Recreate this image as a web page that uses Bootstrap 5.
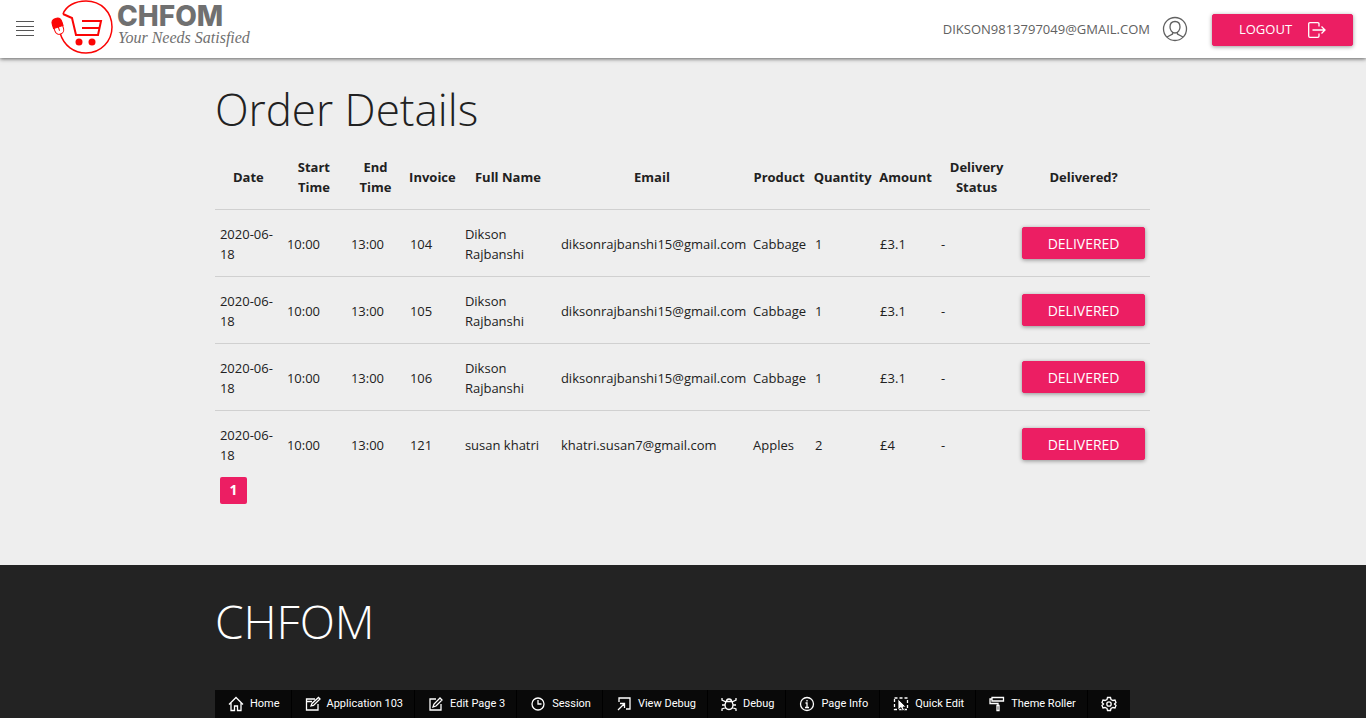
<!DOCTYPE html>
<html lang="en">
<head>
<meta charset="utf-8">
<meta name="viewport" content="width=device-width, initial-scale=1">
<title>Order Details</title>
<link href="https://cdn.jsdelivr.net/npm/bootstrap@5.3.0/dist/css/bootstrap.min.css" rel="stylesheet">
<style>
body { font-family: "Open Sans", "Noto Sans", sans-serif; font-size: 13px; line-height: 20px; color: #212121; background: #eee; }
.topbar { height: 58px; padding-right: 13px; box-shadow: 0 1px 4px rgba(0,0,0,.6); }
.menu-btn { padding: 0; width: 50px; height: 24px; line-height: 1; color: #555; }
.menu-btn svg { display: block; margin: 0 auto; }
.brand-word { font-family: Inter, sans-serif; font-weight: 800; font-size: 28px; fill: #707070; }
.brand-tag { font-family: "Liberation Serif", serif; font-style: italic; font-size: 16px; fill: #707070; }
.user-link { color: #616161; }
.btn-pink { --bs-btn-color: #fff; --bs-btn-bg: #ec1e63; --bs-btn-border-color: #ec1e63; --bs-btn-hover-color: #fff; --bs-btn-hover-bg: #d81b5c; --bs-btn-hover-border-color: #d81b5c; --bs-btn-font-size: 14px; --bs-btn-border-radius: 2px; --bs-btn-padding-y: 0; height: 32px; box-shadow: 0 1px 4px rgba(0,0,0,.4); }
.logout { --bs-btn-font-size: 13px; width: 141px; margin-top: 2px; }
.page-col { width: 70%; padding: 0 11px 0 10px; }
.display-title { font-weight: 300; font-size: 44px; line-height: 55px; }
.content { min-height: 507px; padding-top: 24px; }
.orders { --bs-table-bg: transparent; --bs-table-color: #212121; table-layout: fixed; border-color: #d0d0d0; }
.orders > :not(caption) > * > * { padding: 14px 5px 12px; border-bottom-width: 1px; }
.orders tbody td:last-child { padding: 13px 5px; }
.orders tbody tr:last-child td { border-bottom: 0; }
.orders thead th { padding: 12px 0; text-align: center; vertical-align: middle; font-weight: 700; }
.w-date { width: 67px } .w-start { width: 64px } .w-end { width: 59px } .w-inv { width: 55px } .w-name { width: 96px }
.w-prod { width: 62px } .w-qty { width: 65px } .w-amt { width: 61px } .w-status { width: 81px } .w-act { width: 133px }
.page-num { width: 27px; height: 27px; margin-left: 5px; border-radius: 2px; background: #ec1e63; color: #fff; font-weight: 700; font-size: 14px; line-height: 26px; }
.site-footer { background: #232323; color: #fff; min-height: 153px; padding-top: 29px; }
.site-footer .display-title { font-size: 46px; }
.devbar { background: #090909; height: 28px; width: max-content; }
.devbar button { border: 0; border-right: 1px solid #000; background: none; color: #fff; font-family: Roboto, sans-serif; font-size: 11px; line-height: 28px; padding: 0 11px 0 13px; gap: 6px; white-space: nowrap; }
.devbar button:last-child { border-right: 0; padding-right: 13px; }
svg.line-icon { fill: none; stroke: currentColor; flex: none; }
</style>
</head>
<body>
<header class="topbar bg-white d-flex align-items-center position-relative">
  <button class="btn menu-btn border-0" aria-label="Menu"><svg class="line-icon" width="18" height="16"><path d="M0 .5h18M0 5.500h18M0 9.500h18M0 14.500h18"/></svg></button>
  <a href="#" class="d-block" aria-label="CHFOM home">
    <svg class="d-block" width="206" height="58" viewBox="0 0 206 58">
      <path d="M10 33C14 46 24 53 36 53C51 53 62 41 62 27C62 12 51 1 36 1C25 1 16 6 13 14" fill="none" stroke="#fb0505" stroke-width="1.500"/>
      <path d="M13 14L22 18L26 35H48L51 21H32M32 28H49" fill="none" stroke="#fb0505" stroke-width="2"/>
      <circle cx="29" cy="42" r="3.500" fill="#fb0505"/><circle cx="42" cy="42" r="3.500" fill="#fb0505"/>
      <g transform="rotate(-18 8 26)"><rect x="3.500" y="18.500" width="9" height="16" rx="4.500" fill="#fff" stroke="#fb0505"/><path d="M3 27V23Q3 18 8 18T13 23V27Z" fill="#fb0505" stroke="#fb0505"/><path d="M8 27v4" stroke="#fb0505"/></g>
      <text class="brand-word" x="67" y="26">CHFOM</text>
      <text class="brand-tag" x="68" y="43">Your Needs Satisfied</text>
    </svg>
  </a>
  <a href="#" class="user-link ms-auto text-decoration-none d-flex align-items-center gap-2">DIKSON9813797049@GMAIL.COM
    <svg class="line-icon ms-1" width="26" height="26" viewBox="0 0 26 26" stroke-width="1.300"><circle cx="13" cy="13" r="11.500"/><path d="M13 5.500C9.500 5.500 8 8 8 11S10 17 13 17S18 14 18 11S16.500 5.500 13 5.500M10.500 16.500V18L5 21M15.500 16.500V18L21 21"/></svg>
  </a>
  <button class="btn btn-pink logout d-flex align-items-center justify-content-center ms-4 gap-3">LOGOUT
    <svg class="line-icon" width="18" height="16" viewBox="0 0 18 16" stroke-width="1.300"><path d="M11 4.500V2Q11 .7 9.700 .7H2Q.7 .7 .7 2V14Q.7 15.300 2 15.300H9.700Q11 15.300 11 14V11.500M4.500 8H17M13.500 4.500L17 8L13.500 11.500"/></svg>
  </button>
</header>

<main class="content page-col mx-auto">
  <h1 class="display-title mb-2">Order Details</h1>
  <table class="table orders align-middle mb-0">
    <colgroup><col class="w-date"><col class="w-start"><col class="w-end"><col class="w-inv"><col class="w-name"><col><col class="w-prod"><col class="w-qty"><col class="w-amt"><col class="w-status"><col class="w-act"></colgroup>
    <thead><tr><th>Date</th><th>Start<br>Time</th><th>End<br>Time</th><th>Invoice</th><th>Full Name</th><th>Email</th><th>Product</th><th>Quantity</th><th>Amount</th><th>Delivery<br>Status</th><th>Delivered?</th></tr></thead>
    <tbody>
      <tr><td>2020-06-18</td><td>10:00</td><td>13:00</td><td>104</td><td>Dikson Rajbanshi</td><td>diksonrajbanshi15@gmail.com</td><td>Cabbage</td><td>1</td><td>£3.1</td><td>-</td><td><button class="btn btn-pink w-100">DELIVERED</button></td></tr>
      <tr><td>2020-06-18</td><td>10:00</td><td>13:00</td><td>105</td><td>Dikson Rajbanshi</td><td>diksonrajbanshi15@gmail.com</td><td>Cabbage</td><td>1</td><td>£3.1</td><td>-</td><td><button class="btn btn-pink w-100">DELIVERED</button></td></tr>
      <tr><td>2020-06-18</td><td>10:00</td><td>13:00</td><td>106</td><td>Dikson Rajbanshi</td><td>diksonrajbanshi15@gmail.com</td><td>Cabbage</td><td>1</td><td>£3.1</td><td>-</td><td><button class="btn btn-pink w-100">DELIVERED</button></td></tr>
      <tr><td>2020-06-18</td><td>10:00</td><td>13:00</td><td>121</td><td>susan khatri</td><td>khatri.susan7@gmail.com</td><td>Apples</td><td>2</td><td>£4</td><td>-</td><td><button class="btn btn-pink w-100">DELIVERED</button></td></tr>
    </tbody>
  </table>
  <div class="page-num text-center" aria-current="page">1</div>
</main>

<footer class="site-footer">
  <div class="page-col mx-auto"><h2 class="display-title mb-0">CHFOM</h2></div>
</footer>

<div class="fixed-bottom">
  <div class="page-col mx-auto">
    <div class="devbar d-flex">
      <button class="d-flex align-items-center"><svg class="line-icon" width="16" height="16" viewBox="0 0 16 16" stroke-width="1.300"><path d="M1 8.500L8 1.500L15 8.500M3 7V14.500H6.500V10H9.500V14.500H13V7"/></svg>Home</button>
      <button class="d-flex align-items-center"><svg class="line-icon" width="16" height="16" viewBox="0 0 16 16" stroke-width="1.300"><path d="M10 3H1.500V14H13V8M1.500 5.500H7M6 10L7 7.500L13.500 1.500L15 3L8.500 9.500Z"/></svg>Application 103</button>
      <button class="d-flex align-items-center"><svg class="line-icon" width="16" height="16" viewBox="0 0 16 16" stroke-width="1.300"><path d="M8 3H2V14H13V8M5 11L6 8L12 2L14 4L8 10Z"/></svg>Edit Page 3</button>
      <button class="d-flex align-items-center"><svg class="line-icon" width="16" height="16" viewBox="0 0 16 16" stroke-width="1.300"><circle cx="8" cy="8" r="6"/><path d="M8 4V8H11.500"/></svg>Session</button>
      <button class="d-flex align-items-center"><svg class="line-icon" width="16" height="16" viewBox="0 0 16 16" stroke-width="1.300"><path d="M3 6V2H14V13H10M2 14L8.500 7.500M4 7.500H8.500V12"/></svg>View Debug</button>
      <button class="d-flex align-items-center"><svg class="line-icon" width="16" height="16" viewBox="0 0 16 16" stroke-width="1.300"><path d="M5 5.500H11L12 8.500Q12 13.500 8 13.500T4 8.500ZM5.500 5.500Q5.500 3 8 3T10.500 5.500M1 2V4L5 6M15 2V4L11 6M1 9H4M12 9H15M1 15V13L5 11.500M15 15V13L11 11.500"/></svg>Debug</button>
      <button class="d-flex align-items-center"><svg class="line-icon" width="16" height="16" viewBox="0 0 16 16" stroke-width="1.300"><circle cx="8" cy="8" r="6.500"/><path d="M6.500 7H8V11.500M6 11.500H10M8 4V5.500"/></svg>Page Info</button>
      <button class="d-flex align-items-center"><svg class="line-icon" width="16" height="16" viewBox="0 0 16 16" stroke-width="1.300"><path d="M1.500 2H14.500V13.500H1.500Z" stroke-dasharray="3 2"/><path d="M5 3V14L8 11.500L9.500 15L11.500 14L10 11H13Z" fill="#fff" stroke="#090909" stroke-width=".8"/></svg>Quick Edit</button>
      <button class="d-flex align-items-center"><svg class="line-icon" width="16" height="16" viewBox="0 0 16 16" stroke-width="1.300"><path d="M3 1.500H14.500V5H3ZM3 3H1V7.500H9V9.500M8 9.500H10V14.500H8Z"/></svg>Theme Roller</button>
      <button class="d-flex align-items-center" aria-label="Options"><svg class="line-icon" width="16" height="16" viewBox="0 0 16 16" stroke-width="1.300"><circle cx="8" cy="8" r="2.200"/><path d="M6.500 1.500H9.500L10 3.500L12 4.500L14 4L15 6.500L13.500 8L15 9.500L14 12L12 11.500L10 12.500L9.500 14.500H6.500L6 12.500L4 11.500L2 12L1 9.500L2.500 8L1 6.500L2 4L4 4.500L6 3.500Z"/></svg></button>
    </div>
  </div>
</div>
<script src="https://cdn.jsdelivr.net/npm/bootstrap@5.3.0/dist/js/bootstrap.bundle.min.js"></script>
</body>
</html>
